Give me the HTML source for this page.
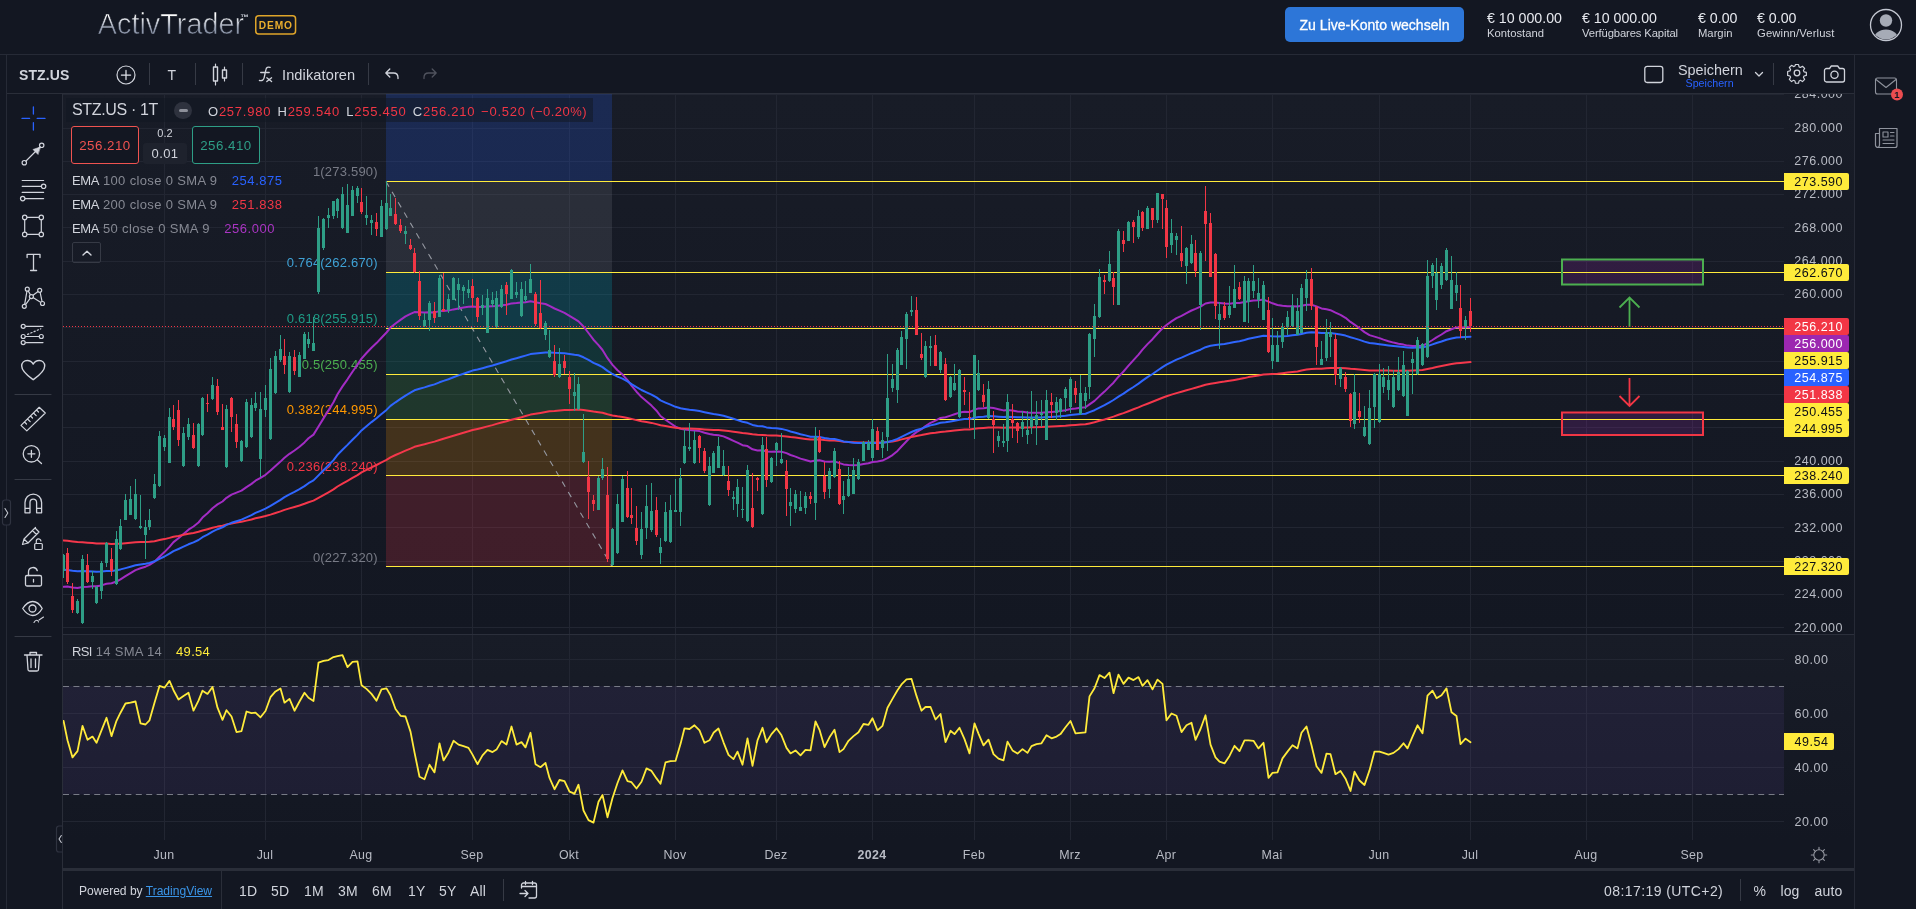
<!DOCTYPE html>
<html lang="de"><head><meta charset="utf-8"><title>ActivTrader</title>
<style>
html,body{margin:0;padding:0;background:#131722;}
body{width:1916px;height:909px;position:relative;overflow:hidden;font-family:"Liberation Sans",Arial,sans-serif;color:#d1d4dc;}
.abs{position:absolute;white-space:nowrap;}
.pane{position:absolute;background:#131722;}
.ln{position:absolute;background:#2a2e39;}
.t{position:absolute;white-space:nowrap;line-height:1;}
.sep{position:absolute;width:1px;background:#363a45;}
svg.ic{position:absolute;overflow:visible;fill:none;stroke:#d1d4dc;stroke-width:1.2;stroke-linecap:round;stroke-linejoin:round;}
</style></head><body>
<div id="wrap" style="position:absolute;left:0;top:0;width:1916px;height:909px;will-change:transform">
<!-- panes -->
<div class="pane" style="left:63px;top:94px;width:1791px;height:540px;background:linear-gradient(#181c27,#131722)"></div>
<div class="pane" style="left:63px;top:635px;width:1791px;height:205px;background:linear-gradient(#181c27,#131722)"></div>
<!-- borders -->
<div class="ln" style="left:0;top:54px;width:1916px;height:1px;background:#262a36"></div>
<div class="ln" style="left:6px;top:55px;width:1px;height:854px;background:#262a36"></div>
<div class="ln" style="left:7px;top:93px;width:1847px;height:1px"></div>
<div class="ln" style="left:62px;top:94px;width:1px;height:815px"></div>
<div class="ln" style="left:63px;top:634px;width:1791px;height:1px;background:#2b2f3b"></div>
<div class="ln" style="left:63px;top:868px;width:1791px;height:3px"></div>
<div class="ln" style="left:1854px;top:55px;width:1px;height:854px;background:#262a36"></div>
<div class="ln" style="left:221px;top:871px;width:1px;height:38px"></div>
<svg width="1916" height="909" viewBox="0 0 1916 909" style="position:absolute;left:0;top:0" font-family="Liberation Sans, Arial, sans-serif">
<defs><clipPath id="cm"><rect x="63" y="94" width="1721" height="540"/></clipPath><clipPath id="cr"><rect x="63" y="635" width="1721" height="205"/></clipPath><clipPath id="cax"><rect x="1784" y="94" width="70" height="540"/></clipPath></defs>
<path d="M164.5 94V634M164.5 635V840M265.5 94V634M265.5 635V840M361.5 94V634M361.5 635V840M472.5 94V634M472.5 635V840M569.5 94V634M569.5 635V840M675.5 94V634M675.5 635V840M776.5 94V634M776.5 635V840M872.5 94V634M872.5 635V840M974.5 94V634M974.5 635V840M1070.5 94V634M1070.5 635V840M1166.5 94V634M1166.5 635V840M1272.5 94V634M1272.5 635V840M1379.5 94V634M1379.5 635V840M1470.5 94V634M1470.5 635V840M1586.5 94V634M1586.5 635V840M1692.5 94V634M1692.5 635V840M63 627.5H1784M63 594.5H1784M63 561.5H1784M63 527.5H1784M63 494.5H1784M63 461.5H1784M63 427.5H1784M63 394.5H1784M63 361.5H1784M63 327.5H1784M63 294.5H1784M63 261.5H1784M63 227.5H1784M63 194.5H1784M63 161.5H1784M63 128.5H1784M63 94.5H1784M63 659.5H1784M63 713.5H1784M63 767.5H1784M63 821.5H1784" stroke="#222632" stroke-width="1" fill="none"/>
<g clip-path="url(#cm)">
<rect x="386" y="94" width="226" height="87" fill="#2962ff" fill-opacity="0.2"/>
<rect x="386" y="181" width="226" height="91" fill="#787b86" fill-opacity="0.2"/>
<rect x="386" y="272" width="226" height="56" fill="#00bcd4" fill-opacity="0.2"/>
<rect x="386" y="328" width="226" height="46" fill="#089981" fill-opacity="0.2"/>
<rect x="386" y="374" width="226" height="45" fill="#4caf50" fill-opacity="0.2"/>
<rect x="386" y="419" width="226" height="56" fill="#ff9800" fill-opacity="0.2"/>
<rect x="386" y="475" width="226" height="91" fill="#f23645" fill-opacity="0.2"/>
<path d="M386 181.5L612 566.5" stroke="#9598a1" stroke-width="1.1" stroke-dasharray="6 6" fill="none"/>
<rect x="1562" y="259.5" width="141" height="25" fill="#9c27b0" fill-opacity="0.2"/>
<rect x="1562" y="412.5" width="141" height="22.5" fill="#9c27b0" fill-opacity="0.2"/>
<rect x="386" y="181" width="1398" height="1" fill="#ffeb3b"/>
<rect x="386" y="272" width="1398" height="1" fill="#ffeb3b"/>
<rect x="386" y="328" width="1398" height="1" fill="#ffeb3b"/>
<rect x="386" y="374" width="1398" height="1" fill="#ffeb3b"/>
<rect x="386" y="419" width="1398" height="1" fill="#ffeb3b"/>
<rect x="386" y="475" width="1398" height="1" fill="#ffeb3b"/>
<rect x="386" y="566" width="1398" height="1" fill="#ffeb3b"/>
<rect x="1562" y="259.5" width="141" height="25" fill="none" stroke="#4caf50" stroke-width="2"/>
<rect x="1562" y="412.5" width="141" height="22.5" fill="none" stroke="#f23645" stroke-width="2"/>
<path d="M1629.5 327V298M1619.5 307.5L1629.5 297.5L1639.5 307.5" stroke="#4caf50" stroke-width="1.8" fill="none"/>
<path d="M1629.5 378V405.500M1619.5 396L1629.5 406L1639.5 396" stroke="#f23645" stroke-width="1.8" fill="none"/>
<text x="377.8" y="176.0" text-anchor="end" font-size="13" letter-spacing="0.2" fill="#787b86">1(273.590)</text>
<text x="377.8" y="267.0" text-anchor="end" font-size="13" letter-spacing="0.2" fill="#3fa2d6">0.764(262.670)</text>
<text x="377.8" y="323.3" text-anchor="end" font-size="13" letter-spacing="0.2" fill="#1f9b86">0.618(255.915)</text>
<text x="377.8" y="368.8" text-anchor="end" font-size="13" letter-spacing="0.2" fill="#4caf50">0.5(250.455)</text>
<text x="377.8" y="414.3" text-anchor="end" font-size="13" letter-spacing="0.2" fill="#ff9800">0.382(244.995)</text>
<text x="377.8" y="470.6" text-anchor="end" font-size="13" letter-spacing="0.2" fill="#f23645">0.236(238.240)</text>
<text x="377.8" y="561.6" text-anchor="end" font-size="13" letter-spacing="0.2" fill="#787b86">0(227.320)</text>
<polyline points="63.5,586.8 67.5,586.6 72.5,587.5 77.5,588.0 82.5,586.9 87.5,586.7 92.5,586.3 96.5,586.3 101.5,585.4 106.5,583.7 111.5,583.2 116.5,581.5 120.5,579.3 125.5,576.2 130.5,573.2 135.5,570.1 140.5,568.3 145.5,566.7 149.5,564.9 154.5,561.7 159.5,556.8 164.5,552.1 169.5,546.9 173.5,542.1 178.5,538.2 183.5,534.0 188.5,529.7 193.5,526.5 198.5,522.5 202.5,517.6 207.5,513.2 212.5,508.2 217.5,504.4 222.5,501.5 226.5,497.8 231.5,494.7 236.5,492.6 241.5,490.6 246.5,487.1 251.5,483.9 255.5,480.7 260.5,477.9 265.5,474.8 270.5,470.6 275.5,466.1 280.5,461.6 284.5,457.8 289.5,453.8 294.5,450.5 299.5,446.8 304.5,442.4 308.5,438.3 313.5,434.6 318.5,426.5 323.5,418.4 328.5,410.4 333.5,402.2 337.5,394.2 342.5,386.4 347.5,379.3 352.5,371.8 357.5,364.6 361.5,358.6 366.5,353.0 371.5,347.8 376.5,343.1 381.5,337.8 386.5,332.5 390.5,327.6 395.5,323.5 400.5,319.9 405.5,316.4 410.5,313.8 414.5,312.1 419.5,312.3 424.5,312.6 429.5,312.2 434.5,312.4 439.5,311.1 443.5,311.1 448.5,310.6 453.5,309.4 458.5,308.4 463.5,307.5 468.5,306.8 472.5,306.5 477.5,306.9 482.5,306.8 487.5,306.5 492.5,306.2 496.5,305.9 501.5,305.2 506.5,304.8 511.5,303.4 516.5,303.0 521.5,302.4 525.5,302.2 530.5,301.3 535.5,302.2 540.5,303.2 545.5,304.0 549.5,305.8 554.5,308.5 559.5,310.6 564.5,312.9 569.5,315.9 574.5,318.9 578.5,321.4 583.5,326.5 588.5,333.0 593.5,339.7 598.5,345.1 602.5,350.0 607.5,358.2 612.5,364.9 617.5,370.3 622.5,374.6 627.5,380.2 631.5,385.6 636.5,391.7 641.5,397.1 646.5,401.3 651.5,405.6 656.5,410.7 660.5,416.0 665.5,419.8 670.5,423.3 675.5,426.7 680.5,428.7 684.5,429.4 689.5,430.1 694.5,430.4 699.5,431.1 704.5,432.7 709.5,434.0 713.5,434.7 718.5,435.2 723.5,436.4 728.5,438.5 733.5,440.8 737.5,442.6 742.5,445.2 747.5,446.1 752.5,449.3 757.5,450.5 762.5,450.3 766.5,451.5 771.5,451.7 776.5,451.4 781.5,451.7 786.5,453.1 790.5,455.0 795.5,456.6 800.5,458.6 805.5,460.0 810.5,461.5 815.5,460.6 819.5,460.3 824.5,461.5 829.5,461.8 834.5,461.4 839.5,463.1 843.5,464.4 848.5,465.0 853.5,465.2 858.5,465.1 863.5,464.1 868.5,463.3 872.5,462.0 877.5,461.5 882.5,460.6 887.5,458.2 892.5,455.1 897.5,450.9 901.5,446.5 906.5,441.3 911.5,436.1 916.5,432.1 921.5,429.2 925.5,426.0 930.5,422.8 935.5,420.6 940.5,417.9 945.5,417.2 950.5,415.6 954.5,414.3 959.5,412.6 964.5,411.8 969.5,412.0 974.5,409.8 978.5,408.4 983.5,408.2 988.5,407.4 993.5,408.1 998.5,409.2 1003.5,410.4 1007.5,410.0 1012.5,410.6 1017.5,411.4 1022.5,411.8 1027.5,412.5 1031.5,412.7 1036.5,412.8 1041.5,412.8 1046.5,412.3 1051.5,412.0 1056.5,411.6 1060.5,411.1 1065.5,410.2 1070.5,409.0 1075.5,408.5 1080.5,407.8 1085.5,407.3 1089.5,404.4 1094.5,400.9 1099.5,396.1 1104.5,391.6 1109.5,386.6 1113.5,382.7 1118.5,376.7 1123.5,371.5 1128.5,365.7 1133.5,360.2 1138.5,354.6 1142.5,349.6 1147.5,344.1 1152.5,339.2 1157.5,333.5 1162.5,328.2 1166.5,325.0 1171.5,321.4 1176.5,318.1 1181.5,315.8 1186.5,313.2 1191.5,310.5 1195.5,308.9 1200.5,306.7 1205.5,303.5 1210.5,302.4 1215.5,302.6 1219.5,303.0 1224.5,303.6 1229.5,303.7 1234.5,303.1 1239.5,302.9 1244.5,302.1 1248.5,301.3 1253.5,300.5 1258.5,300.2 1263.5,299.6 1268.5,301.6 1272.5,303.3 1277.5,305.0 1282.5,305.8 1287.5,306.3 1292.5,306.3 1297.5,306.5 1301.5,305.7 1306.5,304.7 1311.5,304.7 1316.5,306.4 1321.5,308.4 1326.5,309.3 1330.5,310.2 1335.5,312.7 1340.5,314.9 1345.5,317.8 1350.5,321.9 1354.5,324.6 1359.5,328.3 1364.5,332.1 1369.5,335.1 1374.5,336.6 1379.5,338.1 1383.5,339.6 1388.5,341.2 1393.5,342.6 1398.5,343.7 1403.5,344.6 1407.5,345.6 1412.5,346.1 1417.5,345.9 1422.5,345.8 1427.5,343.0 1432.5,340.0 1436.5,337.3 1441.5,334.5 1446.5,331.2 1451.5,329.2 1456.5,327.4 1460.5,327.6 1465.5,327.3 1470.5,327.3" stroke="#a32cc4" stroke-width="2" fill="none" stroke-linejoin="round" stroke-linecap="round"/>
<polyline points="63.5,540.4 67.5,540.8 72.5,541.5 77.5,542.1 82.5,542.3 87.5,542.7 92.5,543.0 96.5,543.4 101.5,543.6 106.5,543.6 111.5,543.9 116.5,543.8 120.5,543.7 125.5,543.2 130.5,542.8 135.5,542.3 140.5,542.1 145.5,542.0 149.5,541.8 154.5,541.2 159.5,540.1 164.5,539.1 169.5,537.9 173.5,536.8 178.5,535.9 183.5,534.8 188.5,533.7 193.5,532.9 198.5,531.8 202.5,530.5 207.5,529.2 212.5,527.8 217.5,526.6 222.5,525.7 226.5,524.5 231.5,523.4 236.5,522.6 241.5,521.8 246.5,520.6 251.5,519.5 255.5,518.3 260.5,517.2 265.5,516.0 270.5,514.6 275.5,513.0 280.5,511.4 284.5,509.9 289.5,508.4 294.5,507.0 299.5,505.5 304.5,503.8 308.5,502.2 313.5,500.6 318.5,497.9 323.5,495.1 328.5,492.3 333.5,489.4 337.5,486.5 342.5,483.6 347.5,480.8 352.5,477.9 357.5,475.1 361.5,472.4 366.5,469.9 371.5,467.4 376.5,465.0 381.5,462.4 386.5,459.9 390.5,457.4 395.5,455.0 400.5,452.8 405.5,450.6 410.5,448.6 414.5,446.8 419.5,445.5 424.5,444.3 429.5,442.9 434.5,441.6 439.5,440.0 443.5,438.7 448.5,437.3 453.5,435.8 458.5,434.2 463.5,432.8 468.5,431.3 472.5,430.0 477.5,428.9 482.5,427.7 487.5,426.4 492.5,425.1 496.5,423.9 501.5,422.5 506.5,421.2 511.5,419.7 516.5,418.5 521.5,417.2 525.5,416.0 530.5,414.6 535.5,413.7 540.5,412.9 545.5,412.0 549.5,411.3 554.5,411.0 559.5,410.5 564.5,410.1 569.5,409.9 574.5,409.7 578.5,409.4 583.5,409.9 588.5,410.7 593.5,411.6 598.5,412.3 602.5,412.8 607.5,414.3 612.5,415.4 617.5,416.3 622.5,416.9 627.5,417.9 631.5,418.9 636.5,420.1 641.5,421.2 646.5,422.1 651.5,422.9 656.5,424.1 660.5,425.3 665.5,426.1 670.5,427.0 675.5,427.8 680.5,428.3 684.5,428.5 689.5,428.6 694.5,428.8 699.5,429.0 704.5,429.4 709.5,429.7 713.5,430.0 718.5,430.1 723.5,430.5 728.5,431.1 733.5,431.7 737.5,432.3 742.5,433.0 747.5,433.4 752.5,434.3 757.5,434.8 762.5,434.9 766.5,435.3 771.5,435.6 776.5,435.6 781.5,435.9 786.5,436.4 790.5,437.0 795.5,437.6 800.5,438.3 805.5,438.9 810.5,439.5 815.5,439.4 819.5,439.6 824.5,440.1 829.5,440.4 834.5,440.5 839.5,441.1 843.5,441.7 848.5,442.1 853.5,442.3 858.5,442.5 863.5,442.5 868.5,442.5 872.5,442.4 877.5,442.5 882.5,442.4 887.5,442.0 892.5,441.4 897.5,440.5 901.5,439.4 906.5,438.2 911.5,436.9 916.5,435.9 921.5,435.1 925.5,434.2 930.5,433.3 935.5,432.7 940.5,431.9 945.5,431.6 950.5,431.0 954.5,430.5 959.5,429.9 964.5,429.6 969.5,429.4 974.5,428.7 978.5,428.2 983.5,427.9 988.5,427.5 993.5,427.5 998.5,427.6 1003.5,427.7 1007.5,427.4 1012.5,427.4 1017.5,427.4 1022.5,427.4 1027.5,427.4 1031.5,427.3 1036.5,427.2 1041.5,427.0 1046.5,426.8 1051.5,426.6 1056.5,426.3 1060.5,426.0 1065.5,425.7 1070.5,425.2 1075.5,424.9 1080.5,424.6 1085.5,424.3 1089.5,423.4 1094.5,422.3 1099.5,420.8 1104.5,419.5 1109.5,417.9 1113.5,416.6 1118.5,414.8 1123.5,413.1 1128.5,411.2 1133.5,409.3 1138.5,407.4 1142.5,405.6 1147.5,403.7 1152.5,401.8 1157.5,399.8 1162.5,397.8 1166.5,396.3 1171.5,394.6 1176.5,393.1 1181.5,391.7 1186.5,390.3 1191.5,388.9 1195.5,387.7 1200.5,386.3 1205.5,384.7 1210.5,383.7 1215.5,382.9 1219.5,382.2 1224.5,381.6 1229.5,380.8 1234.5,379.9 1239.5,379.1 1244.5,378.1 1248.5,377.1 1253.5,376.2 1258.5,375.4 1263.5,374.5 1268.5,374.2 1272.5,374.0 1277.5,373.7 1282.5,373.2 1287.5,372.6 1292.5,372.0 1297.5,371.4 1301.5,370.5 1306.5,369.6 1311.5,369.0 1316.5,368.8 1321.5,368.7 1326.5,368.3 1330.5,367.9 1335.5,368.0 1340.5,368.0 1345.5,368.2 1350.5,368.7 1354.5,369.0 1359.5,369.5 1364.5,370.0 1369.5,370.4 1374.5,370.4 1379.5,370.5 1383.5,370.5 1388.5,370.6 1393.5,370.7 1398.5,370.7 1403.5,370.6 1407.5,370.7 1412.5,370.5 1417.5,370.2 1422.5,370.0 1427.5,369.0 1432.5,368.0 1436.5,367.0 1441.5,366.0 1446.5,364.9 1451.5,364.0 1456.5,363.2 1460.5,362.9 1465.5,362.5 1470.5,362.1" stroke="#f5374b" stroke-width="2" fill="none" stroke-linejoin="round" stroke-linecap="round"/>
<polyline points="63.5,569.7 67.5,569.9 72.5,570.7 77.5,571.3 82.5,571.1 87.5,571.3 92.5,571.4 96.5,571.7 101.5,571.5 106.5,571.0 111.5,571.0 116.5,570.3 120.5,569.4 125.5,568.1 130.5,566.7 135.5,565.3 140.5,564.5 145.5,563.7 149.5,562.9 154.5,561.3 159.5,558.8 164.5,556.5 169.5,553.7 173.5,551.2 178.5,549.0 183.5,546.7 188.5,544.3 193.5,542.4 198.5,540.0 202.5,537.2 207.5,534.6 212.5,531.6 217.5,529.2 222.5,527.3 226.5,524.9 231.5,522.8 236.5,521.2 241.5,519.6 246.5,517.3 251.5,515.1 255.5,512.9 260.5,510.8 265.5,508.6 270.5,505.8 275.5,502.8 280.5,499.8 284.5,497.1 289.5,494.3 294.5,491.9 299.5,489.2 304.5,486.1 308.5,483.2 313.5,480.4 318.5,475.4 323.5,470.3 328.5,465.3 333.5,460.1 337.5,454.9 342.5,449.7 347.5,444.9 352.5,439.8 357.5,434.9 361.5,430.4 366.5,426.2 371.5,422.1 376.5,418.3 381.5,414.1 386.5,409.9 390.5,405.9 395.5,402.3 400.5,398.9 405.5,395.6 410.5,392.7 414.5,390.3 419.5,388.8 424.5,387.4 429.5,385.8 434.5,384.4 439.5,382.3 443.5,380.9 448.5,379.3 453.5,377.3 458.5,375.4 463.5,373.7 468.5,372.0 472.5,370.6 477.5,369.5 482.5,368.2 487.5,366.8 492.5,365.5 496.5,364.2 501.5,362.7 506.5,361.3 511.5,359.5 516.5,358.2 521.5,356.8 525.5,355.6 530.5,354.1 535.5,353.5 540.5,353.0 545.5,352.4 549.5,352.4 554.5,352.8 559.5,353.0 564.5,353.3 569.5,354.0 574.5,354.8 578.5,355.3 583.5,357.3 588.5,359.9 593.5,362.8 598.5,365.0 602.5,367.1 607.5,370.9 612.5,374.0 617.5,376.6 622.5,378.6 627.5,381.4 631.5,384.1 636.5,387.2 641.5,390.0 646.5,392.3 651.5,394.6 656.5,397.4 660.5,400.4 665.5,402.6 670.5,404.7 675.5,406.8 680.5,408.2 684.5,408.9 689.5,409.7 694.5,410.3 699.5,411.0 704.5,412.2 709.5,413.3 713.5,414.1 718.5,414.7 723.5,415.7 728.5,417.2 733.5,418.8 737.5,420.1 742.5,421.8 747.5,422.8 752.5,424.9 757.5,426.0 762.5,426.3 766.5,427.4 771.5,428.0 776.5,428.3 781.5,428.9 786.5,430.1 790.5,431.5 795.5,432.8 800.5,434.2 805.5,435.4 810.5,436.7 815.5,436.7 819.5,437.0 824.5,438.1 829.5,438.7 834.5,439.0 839.5,440.3 843.5,441.4 848.5,442.1 853.5,442.7 858.5,443.1 863.5,443.0 868.5,443.1 872.5,442.8 877.5,442.9 882.5,442.8 887.5,442.0 892.5,440.7 897.5,438.9 901.5,436.9 906.5,434.4 911.5,432.0 916.5,430.0 921.5,428.6 925.5,427.0 930.5,425.4 935.5,424.2 940.5,422.8 945.5,422.3 950.5,421.4 954.5,420.7 959.5,419.7 964.5,419.1 969.5,419.1 974.5,417.8 978.5,417.0 983.5,416.7 988.5,416.1 993.5,416.3 998.5,416.7 1003.5,417.1 1007.5,416.8 1012.5,417.0 1017.5,417.2 1022.5,417.3 1027.5,417.6 1031.5,417.6 1036.5,417.5 1041.5,417.4 1046.5,417.1 1051.5,416.9 1056.5,416.6 1060.5,416.2 1065.5,415.7 1070.5,414.9 1075.5,414.5 1080.5,414.1 1085.5,413.7 1089.5,412.1 1094.5,410.2 1099.5,407.6 1104.5,405.1 1109.5,402.3 1113.5,400.0 1118.5,396.7 1123.5,393.6 1128.5,390.2 1133.5,387.0 1138.5,383.6 1142.5,380.6 1147.5,377.1 1152.5,374.0 1157.5,370.5 1162.5,367.1 1166.5,364.7 1171.5,362.1 1176.5,359.6 1181.5,357.6 1186.5,355.4 1191.5,353.2 1195.5,351.6 1200.5,349.7 1205.5,347.2 1210.5,345.8 1215.5,345.0 1219.5,344.4 1224.5,343.9 1229.5,343.1 1234.5,342.0 1239.5,341.2 1244.5,340.0 1248.5,338.8 1253.5,337.7 1258.5,336.8 1263.5,335.8 1268.5,336.1 1272.5,336.3 1277.5,336.4 1282.5,336.2 1287.5,335.9 1292.5,335.3 1297.5,334.8 1301.5,333.9 1306.5,332.8 1311.5,332.3 1316.5,332.5 1321.5,333.1 1326.5,333.0 1330.5,333.0 1335.5,333.8 1340.5,334.5 1345.5,335.6 1350.5,337.3 1354.5,338.4 1359.5,339.9 1364.5,341.6 1369.5,343.0 1374.5,343.6 1379.5,344.2 1383.5,344.8 1388.5,345.5 1393.5,346.1 1398.5,346.6 1403.5,347.0 1407.5,347.5 1412.5,347.7 1417.5,347.5 1422.5,347.5 1427.5,346.1 1432.5,344.4 1436.5,343.0 1441.5,341.5 1446.5,339.7 1451.5,338.5 1456.5,337.4 1460.5,337.3 1465.5,337.0 1470.5,336.8" stroke="#2f66ff" stroke-width="2" fill="none" stroke-linejoin="round" stroke-linecap="round"/>
<path d="M63.0 554h1V578h-1zM62.0 555h3V571h-3zM77.0 599h1V614h-1zM76.0 601h3V613h-3zM82.0 555h1V624h-1zM81.0 559h3V623h-3zM92.0 571h1V589h-1zM91.0 576h3V582h-3zM96.0 586h1V604h-1zM95.0 587h3V603h-3zM101.0 561h1V599h-1zM100.0 563h3V591h-3zM106.0 542h1V567h-1zM105.0 543h3V563h-3zM116.0 531h1V585h-1zM115.0 539h3V584h-3zM120.0 519h1V550h-1zM119.0 526h3V549h-3zM125.0 494h1V520h-1zM124.0 500h3V520h-3zM130.0 486h1V515h-1zM129.0 499h3V515h-3zM135.0 479h1V520h-1zM134.0 494h3V519h-3zM140.0 495h1V529h-1zM139.0 526h3V528h-3zM145.0 520h1V559h-1zM144.0 527h3V535h-3zM149.0 509h1V530h-1zM148.0 520h3V527h-3zM154.0 474h1V499h-1zM153.0 484h3V498h-3zM159.0 431h1V487h-1zM158.0 436h3V486h-3zM164.0 435h1V451h-1zM163.0 438h3V447h-3zM169.0 408h1V463h-1zM168.0 417h3V463h-3zM183.0 427h1V467h-1zM182.0 433h3V466h-3zM188.0 418h1V440h-1zM187.0 424h3V437h-3zM198.0 423h1V467h-1zM197.0 424h3V466h-3zM202.0 397h1V436h-1zM201.0 398h3V435h-3zM212.0 377h1V400h-1zM211.0 385h3V399h-3zM226.0 405h1V468h-1zM225.0 409h3V467h-3zM241.0 440h1V462h-1zM240.0 441h3V461h-3zM246.0 399h1V448h-1zM245.0 402h3V447h-3zM251.0 398h1V438h-1zM250.0 405h3V437h-3zM255.0 392h1V411h-1zM254.0 403h3V408h-3zM260.0 392h1V477h-1zM259.0 409h3V459h-3zM265.0 385h1V417h-1zM264.0 398h3V410h-3zM270.0 358h1V440h-1zM269.0 369h3V439h-3zM275.0 351h1V394h-1zM274.0 356h3V393h-3zM280.0 335h1V362h-1zM279.0 349h3V360h-3zM289.0 352h1V393h-1zM288.0 356h3V392h-3zM299.0 352h1V377h-1zM298.0 355h3V377h-3zM304.0 332h1V359h-1zM303.0 334h3V359h-3zM308.0 332h1V348h-1zM307.0 339h3V344h-3zM313.0 317h1V351h-1zM312.0 343h3V351h-3zM318.0 216h1V294h-1zM317.0 228h3V292h-3zM323.0 218h1V250h-1zM322.0 219h3V248h-3zM328.0 208h1V228h-1zM327.0 215h3V218h-3zM333.0 201h1V219h-1zM332.0 201h3V216h-3zM337.0 198h1V218h-1zM336.0 199h3V211h-3zM342.0 187h1V229h-1zM341.0 194h3V228h-3zM347.0 184h1V233h-1zM346.0 205h3V233h-3zM352.0 186h1V216h-1zM351.0 190h3V216h-3zM357.0 186h1V203h-1zM356.0 188h3V196h-3zM366.0 196h1V225h-1zM365.0 215h3V218h-3zM371.0 215h1V235h-1zM370.0 220h3V223h-3zM381.0 200h1V237h-1zM380.0 206h3V237h-3zM386.0 181h1V230h-1zM385.0 203h3V229h-3zM390.0 194h1V216h-1zM389.0 208h3V216h-3zM405.0 226h1V244h-1zM404.0 231h3V234h-3zM424.0 313h1V327h-1zM423.0 320h3V326h-3zM429.0 301h1V331h-1zM428.0 303h3V320h-3zM439.0 275h1V317h-1zM438.0 278h3V317h-3zM448.0 294h1V313h-1zM447.0 299h3V310h-3zM453.0 277h1V300h-1zM452.0 278h3V300h-3zM458.0 278h1V310h-1zM457.0 284h3V290h-3zM463.0 285h1V304h-1zM462.0 287h3V291h-3zM468.0 280h1V298h-1zM467.0 289h3V293h-3zM482.0 295h1V315h-1zM481.0 305h3V308h-3zM487.0 289h1V333h-1zM486.0 298h3V333h-3zM492.0 292h1V307h-1zM491.0 300h3V304h-3zM496.0 291h1V328h-1zM495.0 298h3V327h-3zM501.0 285h1V308h-1zM500.0 289h3V307h-3zM511.0 269h1V299h-1zM510.0 270h3V299h-3zM516.0 282h1V298h-1zM515.0 292h3V295h-3zM521.0 282h1V317h-1zM520.0 289h3V316h-3zM525.0 281h1V302h-1zM524.0 296h3V300h-3zM530.0 264h1V293h-1zM529.0 279h3V293h-3zM545.0 321h1V340h-1zM544.0 323h3V335h-3zM549.0 330h1V358h-1zM548.0 350h3V357h-3zM559.0 348h1V378h-1zM558.0 364h3V377h-3zM574.0 373h1V411h-1zM573.0 392h3V396h-3zM578.0 377h1V410h-1zM577.0 384h3V409h-3zM583.0 414h1V463h-1zM582.0 452h3V462h-3zM598.0 476h1V510h-1zM597.0 478h3V510h-3zM602.0 458h1V480h-1zM601.0 469h3V478h-3zM612.0 528h1V566h-1zM611.0 529h3V565h-3zM617.0 494h1V554h-1zM616.0 504h3V553h-3zM622.0 476h1V522h-1zM621.0 479h3V522h-3zM641.0 512h1V559h-1zM640.0 529h3V555h-3zM646.0 485h1V539h-1zM645.0 506h3V528h-3zM651.0 483h1V532h-1zM650.0 511h3V530h-3zM660.0 538h1V564h-1zM659.0 547h3V553h-3zM665.0 502h1V542h-1zM664.0 512h3V541h-3zM670.0 495h1V543h-1zM669.0 510h3V542h-3zM675.0 479h1V512h-1zM674.0 510h3V512h-3zM680.0 468h1V526h-1zM679.0 478h3V512h-3zM684.0 429h1V464h-1zM683.0 446h3V463h-3zM689.0 423h1V451h-1zM688.0 447h3V449h-3zM694.0 431h1V464h-1zM693.0 440h3V463h-3zM709.0 457h1V506h-1zM708.0 466h3V505h-3zM713.0 451h1V473h-1zM712.0 453h3V473h-3zM718.0 437h1V468h-1zM717.0 446h3V468h-3zM723.0 450h1V476h-1zM722.0 466h3V475h-3zM733.0 491h1V510h-1zM732.0 497h3V499h-3zM737.0 479h1V517h-1zM736.0 487h3V504h-3zM742.0 487h1V518h-1zM741.0 509h3V510h-3zM747.0 465h1V522h-1zM746.0 470h3V521h-3zM762.0 437h1V515h-1zM761.0 445h3V514h-3zM771.0 457h1V483h-1zM770.0 458h3V482h-3zM776.0 442h1V466h-1zM775.0 443h3V450h-3zM781.0 433h1V464h-1zM780.0 459h3V463h-3zM790.0 488h1V526h-1zM789.0 502h3V506h-3zM795.0 490h1V513h-1zM794.0 494h3V509h-3zM800.0 491h1V511h-1zM799.0 507h3V511h-3zM805.0 492h1V514h-1zM804.0 496h3V508h-3zM815.0 427h1V520h-1zM814.0 437h3V503h-3zM829.0 468h1V498h-1zM828.0 471h3V489h-3zM834.0 448h1V478h-1zM833.0 451h3V477h-3zM843.0 481h1V514h-1zM842.0 496h3V500h-3zM848.0 467h1V497h-1zM847.0 479h3V496h-3zM853.0 458h1V494h-1zM852.0 470h3V494h-3zM858.0 459h1V480h-1zM857.0 462h3V479h-3zM863.0 441h1V461h-1zM862.0 442h3V461h-3zM868.0 440h1V450h-1zM867.0 443h3V450h-3zM872.0 419h1V461h-1zM871.0 429h3V458h-3zM882.0 432h1V458h-1zM881.0 440h3V448h-3zM887.0 354h1V451h-1zM886.0 398h3V437h-3zM892.0 364h1V392h-1zM891.0 379h3V388h-3zM897.0 348h1V403h-1zM896.0 350h3V390h-3zM901.0 331h1V365h-1zM900.0 337h3V365h-3zM906.0 312h1V369h-1zM905.0 314h3V339h-3zM911.0 296h1V316h-1zM910.0 310h3V312h-3zM925.0 341h1V378h-1zM924.0 346h3V377h-3zM930.0 336h1V366h-1zM929.0 346h3V348h-3zM940.0 351h1V373h-1zM939.0 352h3V370h-3zM950.0 376h1V398h-1zM949.0 377h3V397h-3zM954.0 364h1V391h-1zM953.0 383h3V390h-3zM959.0 369h1V418h-1zM958.0 370h3V417h-3zM974.0 355h1V439h-1zM973.0 355h3V417h-3zM978.0 360h1V391h-1zM977.0 373h3V390h-3zM988.0 381h1V419h-1zM987.0 389h3V418h-3zM998.0 431h1V447h-1zM997.0 436h3V441h-3zM1003.0 424h1V447h-1zM1002.0 441h3V443h-3zM1007.0 394h1V452h-1zM1006.0 402h3V441h-3zM1022.0 411h1V437h-1zM1021.0 422h3V429h-3zM1027.0 411h1V444h-1zM1026.0 430h3V435h-3zM1031.0 391h1V434h-1zM1030.0 418h3V427h-3zM1036.0 401h1V445h-1zM1035.0 415h3V425h-3zM1041.0 400h1V427h-1zM1040.0 413h3V415h-3zM1046.0 390h1V440h-1zM1045.0 400h3V440h-3zM1056.0 397h1V420h-1zM1055.0 402h3V413h-3zM1060.0 398h1V418h-1zM1059.0 399h3V412h-3zM1065.0 387h1V412h-1zM1064.0 389h3V398h-3zM1070.0 377h1V413h-1zM1069.0 379h3V407h-3zM1080.0 375h1V415h-1zM1079.0 393h3V414h-3zM1085.0 387h1V409h-1zM1084.0 393h3V401h-3zM1089.0 333h1V399h-1zM1088.0 334h3V387h-3zM1094.0 304h1V357h-1zM1093.0 316h3V339h-3zM1099.0 269h1V318h-1zM1098.0 277h3V317h-3zM1109.0 251h1V282h-1zM1108.0 264h3V281h-3zM1118.0 229h1V305h-1zM1117.0 231h3V305h-3zM1128.0 221h1V241h-1zM1127.0 222h3V241h-3zM1138.0 210h1V239h-1zM1137.0 216h3V237h-3zM1147.0 206h1V229h-1zM1146.0 208h3V229h-3zM1157.0 193h1V223h-1zM1156.0 193h3V220h-3zM1171.0 219h1V253h-1zM1170.0 233h3V245h-3zM1176.0 233h1V255h-1zM1175.0 236h3V240h-3zM1186.0 247h1V284h-1zM1185.0 248h3V266h-3zM1191.0 235h1V264h-1zM1190.0 244h3V263h-3zM1200.0 251h1V330h-1zM1199.0 253h3V305h-3zM1219.0 302h1V349h-1zM1218.0 314h3V320h-3zM1229.0 286h1V318h-1zM1228.0 306h3V315h-3zM1234.0 265h1V308h-1zM1233.0 289h3V308h-3zM1244.0 276h1V322h-1zM1243.0 281h3V322h-3zM1248.0 278h1V323h-1zM1247.0 281h3V302h-3zM1253.0 265h1V298h-1zM1252.0 281h3V291h-3zM1258.0 278h1V308h-1zM1257.0 293h3V300h-3zM1263.0 281h1V320h-1zM1262.0 285h3V320h-3zM1272.0 318h1V369h-1zM1271.0 345h3V361h-3zM1277.0 331h1V362h-1zM1276.0 345h3V362h-3zM1282.0 323h1V348h-1zM1281.0 327h3V342h-3zM1287.0 311h1V335h-1zM1286.0 317h3V327h-3zM1292.0 294h1V327h-1zM1291.0 306h3V326h-3zM1297.0 298h1V335h-1zM1296.0 311h3V335h-3zM1301.0 284h1V333h-1zM1300.0 288h3V333h-3zM1306.0 270h1V311h-1zM1305.0 279h3V298h-3zM1321.0 341h1V365h-1zM1320.0 359h3V365h-3zM1326.0 319h1V361h-1zM1325.0 332h3V358h-3zM1330.0 322h1V357h-1zM1329.0 332h3V337h-3zM1340.0 367h1V387h-1zM1339.0 368h3V379h-3zM1354.0 374h1V429h-1zM1353.0 392h3V424h-3zM1364.0 406h1V437h-1zM1363.0 427h3V436h-3zM1369.0 390h1V445h-1zM1368.0 408h3V444h-3zM1374.0 373h1V428h-1zM1373.0 374h3V407h-3zM1379.0 364h1V423h-1zM1378.0 374h3V422h-3zM1383.0 368h1V393h-1zM1382.0 377h3V387h-3zM1388.0 366h1V400h-1zM1387.0 380h3V390h-3zM1393.0 370h1V408h-1zM1392.0 377h3V407h-3zM1398.0 357h1V391h-1zM1397.0 372h3V390h-3zM1403.0 351h1V397h-1zM1402.0 365h3V396h-3zM1407.0 370h1V416h-1zM1406.0 371h3V416h-3zM1412.0 352h1V394h-1zM1411.0 359h3V363h-3zM1417.0 337h1V375h-1zM1416.0 340h3V374h-3zM1422.0 343h1V366h-1zM1421.0 344h3V365h-3zM1427.0 260h1V358h-1zM1426.0 276h3V357h-3zM1432.0 263h1V288h-1zM1431.0 265h3V276h-3zM1436.0 258h1V310h-1zM1435.0 273h3V300h-3zM1441.0 263h1V289h-1zM1440.0 266h3V285h-3zM1446.0 248h1V281h-1zM1445.0 250h3V280h-3zM1451.0 256h1V309h-1zM1450.0 280h3V309h-3zM1456.0 272h1V301h-1zM1455.0 285h3V293h-3zM1465.0 316h1V340h-1zM1464.0 320h3V327h-3z" fill="#2e9e86"/>
<path d="M67.0 548h1V584h-1zM66.0 553h3V582h-3zM72.0 583h1V613h-1zM71.0 596h3V610h-3zM87.0 554h1V583h-1zM86.0 565h3V582h-3zM111.0 548h1V576h-1zM110.0 559h3V571h-3zM173.0 405h1V430h-1zM172.0 419h3V427h-3zM178.0 400h1V446h-1zM177.0 410h3V440h-3zM193.0 423h1V449h-1zM192.0 435h3V448h-3zM207.0 394h1V412h-1zM206.0 403h3V404h-3zM217.0 379h1V415h-1zM216.0 386h3V412h-3zM222.0 404h1V430h-1zM221.0 427h3V430h-3zM231.0 397h1V432h-1zM230.0 398h3V417h-3zM236.0 414h1V448h-1zM235.0 424h3V442h-3zM284.0 339h1V374h-1zM283.0 356h3V365h-3zM294.0 350h1V375h-1zM293.0 357h3V371h-3zM361.0 188h1V214h-1zM360.0 202h3V212h-3zM376.0 213h1V236h-1zM375.0 222h3V229h-3zM395.0 198h1V225h-1zM394.0 214h3V224h-3zM400.0 219h1V233h-1zM399.0 225h3V231h-3zM410.0 239h1V250h-1zM409.0 245h3V249h-3zM414.0 248h1V273h-1zM413.0 253h3V272h-3zM419.0 271h1V320h-1zM418.0 281h3V316h-3zM434.0 302h1V323h-1zM433.0 311h3V318h-3zM443.0 273h1V312h-1zM442.0 309h3V311h-3zM472.0 279h1V307h-1zM471.0 286h3V298h-3zM477.0 297h1V322h-1zM476.0 298h3V317h-3zM506.0 282h1V315h-1zM505.0 285h3V294h-3zM535.0 292h1V326h-1zM534.0 294h3V324h-3zM540.0 280h1V329h-1zM539.0 313h3V328h-3zM554.0 345h1V377h-1zM553.0 361h3V375h-3zM564.0 355h1V374h-1zM563.0 361h3V368h-3zM569.0 371h1V404h-1zM568.0 377h3V389h-3zM588.0 461h1V519h-1zM587.0 477h3V492h-3zM593.0 495h1V511h-1zM592.0 500h3V504h-3zM607.0 467h1V562h-1zM606.0 495h3V559h-3zM627.0 471h1V518h-1zM626.0 488h3V517h-3zM631.0 488h1V524h-1zM630.0 515h3V518h-3zM636.0 506h1V545h-1zM635.0 528h3V541h-3zM656.0 497h1V537h-1zM655.0 510h3V535h-3zM699.0 435h1V463h-1zM698.0 436h3V448h-3zM704.0 448h1V473h-1zM703.0 451h3V471h-3zM728.0 466h1V496h-1zM727.0 481h3V490h-3zM752.0 473h1V528h-1zM751.0 508h3V527h-3zM757.0 477h1V491h-1zM756.0 478h3V480h-3zM766.0 437h1V487h-1zM765.0 449h3V480h-3zM786.0 460h1V516h-1zM785.0 471h3V489h-3zM810.0 492h1V504h-1zM809.0 496h3V499h-3zM819.0 430h1V453h-1zM818.0 437h3V452h-3zM824.0 462h1V499h-1zM823.0 476h3V492h-3zM839.0 461h1V505h-1zM838.0 469h3V504h-3zM877.0 427h1V450h-1zM876.0 431h3V450h-3zM916.0 297h1V335h-1zM915.0 310h3V335h-3zM921.0 333h1V360h-1zM920.0 354h3V358h-3zM935.0 335h1V366h-1zM934.0 345h3V366h-3zM945.0 358h1V401h-1zM944.0 364h3V400h-3zM964.0 377h1V405h-1zM963.0 390h3V392h-3zM969.0 392h1V428h-1zM968.0 417h3V418h-3zM983.0 384h1V407h-1zM982.0 395h3V402h-3zM993.0 411h1V453h-1zM992.0 419h3V425h-3zM1012.0 404h1V438h-1zM1011.0 419h3V423h-3zM1017.0 422h1V443h-1zM1016.0 423h3V431h-3zM1051.0 393h1V418h-1zM1050.0 402h3V405h-3zM1075.0 381h1V403h-1zM1074.0 388h3V395h-3zM1104.0 275h1V294h-1zM1103.0 280h3V282h-3zM1113.0 272h1V305h-1zM1112.0 278h3V287h-3zM1123.0 231h1V252h-1zM1122.0 240h3V244h-3zM1133.0 220h1V243h-1zM1132.0 222h3V227h-3zM1142.0 211h1V231h-1zM1141.0 212h3V228h-3zM1152.0 208h1V228h-1zM1151.0 208h3V220h-3zM1162.0 194h1V229h-1zM1161.0 194h3V199h-3zM1166.0 200h1V258h-1zM1165.0 208h3V247h-3zM1181.0 226h1V267h-1zM1180.0 253h3V261h-3zM1195.0 240h1V277h-1zM1194.0 253h3V271h-3zM1205.0 186h1V261h-1zM1204.0 211h3V224h-3zM1210.0 213h1V277h-1zM1209.0 223h3V277h-3zM1215.0 253h1V319h-1zM1214.0 254h3V306h-3zM1224.0 302h1V320h-1zM1223.0 306h3V318h-3zM1239.0 282h1V300h-1zM1238.0 287h3V299h-3zM1268.0 297h1V353h-1zM1267.0 310h3V352h-3zM1311.0 268h1V310h-1zM1310.0 279h3V306h-3zM1316.0 306h1V365h-1zM1315.0 307h3V347h-3zM1335.0 334h1V385h-1zM1334.0 339h3V375h-3zM1345.0 372h1V392h-1zM1344.0 377h3V389h-3zM1350.0 393h1V427h-1zM1349.0 394h3V421h-3zM1359.0 393h1V423h-1zM1358.0 411h3V417h-3zM1460.0 285h1V338h-1zM1459.0 308h3V331h-3zM1470.0 298h1V332h-1zM1469.0 311h3V326h-3z" fill="#f23645"/>
<path d="M63 326.5H1784" stroke="#f23645" stroke-width="1" stroke-dasharray="1 2" fill="none"/>
</g>
<g clip-path="url(#cr)">
<rect x="63" y="686.0" width="1721" height="108.5" fill="#7e57c2" fill-opacity="0.1"/>
<path d="M63 686.5H1784" stroke="#787b86" stroke-width="1" stroke-dasharray="6 4.4" fill="none"/>
<path d="M63 794.5H1784" stroke="#787b86" stroke-width="1" stroke-dasharray="6 4.4" fill="none"/>
<polyline points="63.5,720.8 67.5,740.3 72.5,757.4 77.5,751.1 82.5,725.8 87.5,739.8 92.5,736.6 96.5,742.8 101.5,730.3 106.5,717.8 111.5,736.1 116.5,720.8 120.5,712.7 125.5,703.5 130.5,702.7 135.5,701.5 140.5,723.3 145.5,724.5 149.5,720.3 154.5,702.7 159.5,685.9 164.5,687.7 169.5,680.9 173.5,690.2 178.5,699.5 183.5,695.9 188.5,692.7 193.5,710.7 198.5,700.7 202.5,690.7 207.5,693.9 212.5,686.9 217.5,707.7 222.5,719.8 226.5,710.2 231.5,716.5 236.5,732.1 241.5,731.1 246.5,711.5 251.5,713.2 255.5,712.7 260.5,717.3 265.5,711.0 270.5,697.2 275.5,691.4 280.5,688.4 284.5,702.7 289.5,698.9 294.5,710.7 299.5,701.5 304.5,692.7 308.5,697.7 313.5,701.0 318.5,662.6 323.5,660.8 328.5,660.1 333.5,657.1 337.5,656.1 342.5,655.1 347.5,667.1 352.5,661.8 357.5,661.3 361.5,685.2 366.5,688.9 371.5,693.9 376.5,700.7 381.5,689.4 386.5,688.4 390.5,695.2 395.5,709.0 400.5,715.8 405.5,716.5 410.5,731.6 414.5,752.4 419.5,776.7 424.5,779.2 429.5,764.7 434.5,772.4 439.5,743.3 443.5,760.4 448.5,752.4 453.5,740.8 458.5,744.6 463.5,746.1 468.5,747.9 472.5,754.6 477.5,764.2 482.5,755.4 487.5,749.9 492.5,752.1 496.5,749.6 501.5,741.1 506.5,744.6 511.5,726.5 516.5,744.6 521.5,742.1 525.5,747.4 530.5,732.8 535.5,764.2 540.5,767.2 545.5,762.9 549.5,777.9 554.5,789.2 559.5,780.0 564.5,781.2 569.5,791.7 574.5,793.7 578.5,784.7 583.5,810.5 588.5,820.1 593.5,822.6 598.5,801.8 602.5,795.0 607.5,817.3 612.5,798.0 617.5,783.0 622.5,770.4 627.5,781.2 631.5,782.2 636.5,788.5 641.5,781.7 646.5,768.4 651.5,770.9 656.5,778.4 660.5,783.7 665.5,762.4 670.5,761.1 675.5,760.9 680.5,744.1 684.5,728.3 689.5,729.0 694.5,725.3 699.5,730.3 704.5,742.8 709.5,740.3 713.5,732.8 718.5,728.5 723.5,742.3 728.5,754.9 733.5,759.1 737.5,751.6 742.5,764.7 747.5,738.3 752.5,765.9 757.5,740.3 762.5,727.8 766.5,742.3 771.5,734.1 776.5,728.3 781.5,735.3 786.5,747.9 790.5,753.4 795.5,750.4 800.5,755.4 805.5,749.9 810.5,750.4 815.5,721.5 819.5,729.8 824.5,747.1 829.5,737.3 834.5,729.8 839.5,752.1 843.5,749.1 848.5,740.8 853.5,736.1 858.5,732.3 863.5,724.0 868.5,724.8 872.5,718.3 877.5,730.3 882.5,725.8 887.5,707.7 892.5,698.9 897.5,690.2 901.5,684.4 906.5,679.4 911.5,678.9 916.5,695.9 921.5,710.7 925.5,707.0 930.5,707.0 935.5,719.5 940.5,714.0 945.5,742.1 950.5,730.8 954.5,734.1 959.5,727.8 964.5,739.1 969.5,753.4 974.5,723.3 978.5,733.6 983.5,745.3 988.5,739.6 993.5,754.1 998.5,758.6 1003.5,760.4 1007.5,741.6 1012.5,750.4 1017.5,753.6 1022.5,749.1 1027.5,752.9 1031.5,746.1 1036.5,744.1 1041.5,743.3 1046.5,735.3 1051.5,738.3 1056.5,736.6 1060.5,734.1 1065.5,727.3 1070.5,721.0 1075.5,733.3 1080.5,732.8 1085.5,732.3 1089.5,696.4 1094.5,688.2 1099.5,675.1 1104.5,678.1 1109.5,672.6 1113.5,693.2 1118.5,674.6 1123.5,683.9 1128.5,677.6 1133.5,680.1 1138.5,677.1 1142.5,685.9 1147.5,680.1 1152.5,689.4 1157.5,679.6 1162.5,683.9 1166.5,720.3 1171.5,713.5 1176.5,715.8 1181.5,732.1 1186.5,725.3 1191.5,722.8 1195.5,739.8 1200.5,729.0 1205.5,715.3 1210.5,744.6 1215.5,757.4 1219.5,761.6 1224.5,763.4 1229.5,755.9 1234.5,745.8 1239.5,751.1 1244.5,740.3 1248.5,740.3 1253.5,740.8 1258.5,748.4 1263.5,742.8 1268.5,777.9 1272.5,772.9 1277.5,772.4 1282.5,758.4 1287.5,751.6 1292.5,745.3 1297.5,748.4 1301.5,732.8 1306.5,726.5 1311.5,745.3 1316.5,766.2 1321.5,772.9 1326.5,753.6 1330.5,754.1 1335.5,774.2 1340.5,770.9 1345.5,778.7 1350.5,791.0 1354.5,771.7 1359.5,780.5 1364.5,785.0 1369.5,770.4 1374.5,751.6 1379.5,751.6 1383.5,752.9 1388.5,754.6 1393.5,752.9 1398.5,749.1 1403.5,743.3 1407.5,748.4 1412.5,736.6 1417.5,725.3 1422.5,733.3 1427.5,695.7 1432.5,690.7 1436.5,698.2 1441.5,695.2 1446.5,688.4 1451.5,712.2 1456.5,716.0 1460.5,744.1 1465.5,738.6 1470.5,742.3" stroke="#ffeb3b" stroke-width="1.8" fill="none" stroke-linejoin="round" stroke-linecap="round"/>
</g>
<g clip-path="url(#cax)">
<text x="1818.7" y="631.7" text-anchor="middle" font-size="12.5" letter-spacing="0.5" fill="#b8bbc4">220.000</text>
<text x="1818.7" y="598.4" text-anchor="middle" font-size="12.5" letter-spacing="0.5" fill="#b8bbc4">224.000</text>
<text x="1818.7" y="565.0" text-anchor="middle" font-size="12.5" letter-spacing="0.5" fill="#b8bbc4">228.000</text>
<text x="1818.7" y="531.7" text-anchor="middle" font-size="12.5" letter-spacing="0.5" fill="#b8bbc4">232.000</text>
<text x="1818.7" y="498.4" text-anchor="middle" font-size="12.5" letter-spacing="0.5" fill="#b8bbc4">236.000</text>
<text x="1818.7" y="465.0" text-anchor="middle" font-size="12.5" letter-spacing="0.5" fill="#b8bbc4">240.000</text>
<text x="1818.7" y="431.7" text-anchor="middle" font-size="12.5" letter-spacing="0.5" fill="#b8bbc4">244.000</text>
<text x="1818.7" y="398.4" text-anchor="middle" font-size="12.5" letter-spacing="0.5" fill="#b8bbc4">248.000</text>
<text x="1818.7" y="365.0" text-anchor="middle" font-size="12.5" letter-spacing="0.5" fill="#b8bbc4">252.000</text>
<text x="1818.7" y="331.7" text-anchor="middle" font-size="12.5" letter-spacing="0.5" fill="#b8bbc4">256.000</text>
<text x="1818.7" y="298.4" text-anchor="middle" font-size="12.5" letter-spacing="0.5" fill="#b8bbc4">260.000</text>
<text x="1818.7" y="265.0" text-anchor="middle" font-size="12.5" letter-spacing="0.5" fill="#b8bbc4">264.000</text>
<text x="1818.7" y="231.7" text-anchor="middle" font-size="12.5" letter-spacing="0.5" fill="#b8bbc4">268.000</text>
<text x="1818.7" y="198.4" text-anchor="middle" font-size="12.5" letter-spacing="0.5" fill="#b8bbc4">272.000</text>
<text x="1818.7" y="165.0" text-anchor="middle" font-size="12.5" letter-spacing="0.5" fill="#b8bbc4">276.000</text>
<text x="1818.7" y="131.7" text-anchor="middle" font-size="12.5" letter-spacing="0.5" fill="#b8bbc4">280.000</text>
<text x="1818.7" y="98.4" text-anchor="middle" font-size="12.5" letter-spacing="0.5" fill="#b8bbc4">284.000</text>
</g>
<text x="1811.5" y="663.9" text-anchor="middle" font-size="12.5" letter-spacing="0.5" fill="#b8bbc4">80.00</text>
<text x="1811.5" y="717.9" text-anchor="middle" font-size="12.5" letter-spacing="0.5" fill="#b8bbc4">60.00</text>
<text x="1811.5" y="771.9" text-anchor="middle" font-size="12.5" letter-spacing="0.5" fill="#b8bbc4">40.00</text>
<text x="1811.5" y="825.9" text-anchor="middle" font-size="12.5" letter-spacing="0.5" fill="#b8bbc4">20.00</text>
<path d="M1784 173.0h63a2 2 0 0 1 2 2v13a2 2 0 0 1 -2 2h-63z" fill="#ffeb3b"/>
<text x="1818.7" y="186.0" text-anchor="middle" font-size="12.5" letter-spacing="0.5" fill="#0c0e15">273.590</text>
<path d="M1784 264.0h63a2 2 0 0 1 2 2v13a2 2 0 0 1 -2 2h-63z" fill="#ffeb3b"/>
<text x="1818.7" y="277.0" text-anchor="middle" font-size="12.5" letter-spacing="0.5" fill="#0c0e15">262.670</text>
<path d="M1784 318.0h63a2 2 0 0 1 2 2v13a2 2 0 0 1 -2 2h-63z" fill="#f23645"/>
<text x="1818.7" y="331.0" text-anchor="middle" font-size="12.5" letter-spacing="0.5" fill="#fff">256.210</text>
<path d="M1784 335.0h63a2 2 0 0 1 2 2v13a2 2 0 0 1 -2 2h-63z" fill="#9c27b0"/>
<text x="1818.7" y="348.0" text-anchor="middle" font-size="12.5" letter-spacing="0.5" fill="#fff">256.000</text>
<path d="M1784 352.0h63a2 2 0 0 1 2 2v13a2 2 0 0 1 -2 2h-63z" fill="#ffeb3b"/>
<text x="1818.7" y="365.0" text-anchor="middle" font-size="12.5" letter-spacing="0.5" fill="#0c0e15">255.915</text>
<path d="M1784 369.0h63a2 2 0 0 1 2 2v13a2 2 0 0 1 -2 2h-63z" fill="#2962ff"/>
<text x="1818.7" y="382.0" text-anchor="middle" font-size="12.5" letter-spacing="0.5" fill="#fff">254.875</text>
<path d="M1784 386.0h63a2 2 0 0 1 2 2v13a2 2 0 0 1 -2 2h-63z" fill="#f23645"/>
<text x="1818.7" y="399.0" text-anchor="middle" font-size="12.5" letter-spacing="0.5" fill="#fff">251.838</text>
<path d="M1784 403.0h63a2 2 0 0 1 2 2v13a2 2 0 0 1 -2 2h-63z" fill="#ffeb3b"/>
<text x="1818.7" y="416.0" text-anchor="middle" font-size="12.5" letter-spacing="0.5" fill="#0c0e15">250.455</text>
<path d="M1784 420.0h63a2 2 0 0 1 2 2v13a2 2 0 0 1 -2 2h-63z" fill="#ffeb3b"/>
<text x="1818.7" y="433.0" text-anchor="middle" font-size="12.5" letter-spacing="0.5" fill="#0c0e15">244.995</text>
<path d="M1784 467.0h63a2 2 0 0 1 2 2v13a2 2 0 0 1 -2 2h-63z" fill="#ffeb3b"/>
<text x="1818.7" y="480.0" text-anchor="middle" font-size="12.5" letter-spacing="0.5" fill="#0c0e15">238.240</text>
<path d="M1784 558.0h63a2 2 0 0 1 2 2v13a2 2 0 0 1 -2 2h-63z" fill="#ffeb3b"/>
<text x="1818.7" y="571.0" text-anchor="middle" font-size="12.5" letter-spacing="0.5" fill="#0c0e15">227.320</text>
<path d="M1784 733h48a2 2 0 0 1 2 2v13a2 2 0 0 1 -2 2h-48z" fill="#ffeb3b"/>
<text x="1811.5" y="746" text-anchor="middle" font-size="12.5" letter-spacing="0.5" fill="#0c0e15">49.54</text>
<text x="164.0" y="859" text-anchor="middle" font-size="12.4" letter-spacing="0.3" fill="#b8bbc4">Jun</text>
<text x="265.0" y="859" text-anchor="middle" font-size="12.4" letter-spacing="0.3" fill="#b8bbc4">Jul</text>
<text x="361.0" y="859" text-anchor="middle" font-size="12.4" letter-spacing="0.3" fill="#b8bbc4">Aug</text>
<text x="472.0" y="859" text-anchor="middle" font-size="12.4" letter-spacing="0.3" fill="#b8bbc4">Sep</text>
<text x="569.0" y="859" text-anchor="middle" font-size="12.4" letter-spacing="0.3" fill="#b8bbc4">Okt</text>
<text x="675.0" y="859" text-anchor="middle" font-size="12.4" letter-spacing="0.3" fill="#b8bbc4">Nov</text>
<text x="776.0" y="859" text-anchor="middle" font-size="12.4" letter-spacing="0.3" fill="#b8bbc4">Dez</text>
<text x="872.0" y="859" text-anchor="middle" font-size="12.4" letter-spacing="0.3" fill="#b8bbc4" font-weight="bold">2024</text>
<text x="974.0" y="859" text-anchor="middle" font-size="12.4" letter-spacing="0.3" fill="#b8bbc4">Feb</text>
<text x="1070.0" y="859" text-anchor="middle" font-size="12.4" letter-spacing="0.3" fill="#b8bbc4">Mrz</text>
<text x="1166.0" y="859" text-anchor="middle" font-size="12.4" letter-spacing="0.3" fill="#b8bbc4">Apr</text>
<text x="1272.0" y="859" text-anchor="middle" font-size="12.4" letter-spacing="0.3" fill="#b8bbc4">Mai</text>
<text x="1379.0" y="859" text-anchor="middle" font-size="12.4" letter-spacing="0.3" fill="#b8bbc4">Jun</text>
<text x="1470.0" y="859" text-anchor="middle" font-size="12.4" letter-spacing="0.3" fill="#b8bbc4">Jul</text>
<text x="1586.0" y="859" text-anchor="middle" font-size="12.4" letter-spacing="0.3" fill="#b8bbc4">Aug</text>
<text x="1692.0" y="859" text-anchor="middle" font-size="12.4" letter-spacing="0.3" fill="#b8bbc4">Sep</text>
</svg>
<!-- header -->
<svg width="320" height="54" style="position:absolute;left:0;top:0" font-family="Liberation Sans, Arial, sans-serif">
<defs><linearGradient id="lg" x1="0" y1="0" x2="0" y2="1"><stop offset="0.25" stop-color="#ffffff"/><stop offset="0.68" stop-color="#8d96a9"/></linearGradient></defs>
<text x="97.8" y="34" font-size="29.5" textLength="146.3" lengthAdjust="spacingAndGlyphs" fill="url(#lg)" stroke="#131722" stroke-width="0.7" paint-order="fill stroke">ActivTrader</text>
<text x="240.500" y="19.500" font-size="8" font-weight="bold" fill="#d5d9e3" textLength="8.500" lengthAdjust="spacingAndGlyphs">™</text>
<rect x="255.75" y="15.75" width="39.8" height="18.3" rx="3" fill="none" stroke="#dfa52a" stroke-width="1.5"/>
<text x="275.8" y="28.7" font-size="10.2" font-weight="bold" text-anchor="middle" fill="#e9ad2d" letter-spacing="0.9">DEMO</text>
</svg>
<div class="abs" style="left:1285px;top:7px;width:179px;height:35px;border-radius:5px;background:#2d76d8;color:#fff;font-size:14.050px;line-height:36px;text-align:center;font-weight:normal;-webkit-text-stroke:0.300px #fff">Zu Live-Konto wechseln</div>
<div class="t" style="left:1487px;top:10.800px;font-size:14.200px;color:#e6e8ee">€ 10 000.00</div>
<div class="t" style="left:1487px;top:27.9px;font-size:11.25px;color:#d1d4dc">Kontostand</div>
<div class="t" style="left:1582px;top:10.800px;font-size:14.200px;color:#e6e8ee">€ 10 000.00</div>
<div class="t" style="left:1582px;top:27.9px;font-size:11.25px;color:#d1d4dc;letter-spacing:-0.12px">Verfügbares Kapital</div>
<div class="t" style="left:1698px;top:10.800px;font-size:14.200px;color:#e6e8ee">€ 0.00</div>
<div class="t" style="left:1698px;top:27.9px;font-size:11.25px;color:#d1d4dc">Margin</div>
<div class="t" style="left:1757px;top:10.800px;font-size:14.200px;color:#e6e8ee">€ 0.00</div>
<div class="t" style="left:1757px;top:27.9px;font-size:11.25px;color:#d1d4dc;letter-spacing:0.14px">Gewinn/Verlust</div>
<svg width="40" height="40" style="position:absolute;left:1866px;top:5px"><defs><clipPath id="uc"><circle cx="20" cy="20" r="14.5"/></clipPath></defs>
<circle cx="20" cy="20" r="15.5" fill="none" stroke="#c3c7d1" stroke-width="1.3"/>
<g clip-path="url(#uc)" fill="#a6abb6"><circle cx="20" cy="15.5" r="6.2"/><ellipse cx="20" cy="35" rx="12.5" ry="10.5"/></g></svg>

<!-- top toolbar -->
<div class="t" style="left:19px;top:68px;font-size:14px;font-weight:bold;color:#d1d4dc;letter-spacing:0.1px">STZ.US</div>
<svg class="ic" style="left:115.5px;top:64.5px" width="20" height="20"><circle cx="10" cy="10" r="9"/><path d="M10 5.4V14.600M5.400 10H14.600" stroke="#e0e2e9" stroke-width="1.25"/></svg>
<div class="sep" style="left:149px;top:63px;height:22px"></div>
<div class="t" style="left:167.5px;top:68px;font-size:14px;color:#d1d4dc">T</div>
<div class="sep" style="left:195px;top:63px;height:22px"></div>
<svg class="ic" style="left:210px;top:62px" width="20" height="24"><path d="M5.5 2V5M5.5 19V23M14.5 5V8M14.5 16V19"/><rect x="3.5" y="5" width="4" height="14" stroke-width="1.4"/><rect x="12.5" y="8" width="4" height="8" stroke-width="1.4"/></svg>
<div class="sep" style="left:242px;top:63px;height:22px"></div>
<svg class="ic" style="left:256px;top:63px" width="20" height="24"><path d="M14.1 4.4c-2.2-.9-3.800 0-4.200 2.300L8.200 14.500c-.4 2.500-2 3.600-4.800 3M4.700 9.500h8.500M10.800 14.800l4.800 3.800M15.600 14.800l-4.800 3.800" stroke-width="1.3"/></svg>
<div class="t" style="left:282px;top:67.5px;font-size:14.6px;color:#d1d4dc;letter-spacing:0.1px">Indikatoren</div>
<div class="sep" style="left:368px;top:63px;height:22px"></div>
<svg class="ic" style="left:383px;top:66px" width="18" height="16"><path d="M6.800 3L2.800 7L6.800 11M2.800 7h7.700c2.700 0 4.500 1.800 4.500 4.500V12.500" stroke-width="1.3"/></svg>
<svg class="ic" style="left:421px;top:66px;stroke:#50535e" width="18" height="16"><path d="M11.200 3L15.200 7L11.200 11M15.200 7H7.500c-2.700 0-4.500 1.800-4.500 4.500V12.500" stroke-width="1.3"/></svg>
<!-- toolbar right -->
<svg class="ic" style="left:1644px;top:65px" width="20" height="20"><rect x="0.8" y="1.3" width="18" height="16.2" rx="2.4" stroke-width="1.3"/></svg>
<div class="t" style="left:1678px;top:63.2px;font-size:14.4px;color:#d1d4dc">Speichern</div>
<div class="t" style="left:1685.500px;top:78px;font-size:10.700px;color:#2962ff">Speichern</div>
<svg class="ic" style="left:1753px;top:70px" width="12" height="8"><path d="M2.5 2.5L6 6L9.5 2.5" stroke-width="1.3"/></svg>
<div class="sep" style="left:1773px;top:63px;height:22px"></div>
<svg class="ic" style="left:1786px;top:62.300px" width="22" height="22"><circle cx="11" cy="11" r="2.8" stroke-width="1.3"/><path stroke-width="1.3" d="M9.3 1.6h3.4l.6 2.6 1.5.7 2.3-1.4 2.4 2.4-1.4 2.3.7 1.5 2.6.6v3.4l-2.6.6-.7 1.5 1.4 2.3-2.4 2.4-2.3-1.4-1.5.7-.6 2.6H9.3l-.6-2.6-1.5-.7-2.3 1.4-2.4-2.4 1.4-2.3-.7-1.5-2.6-.6V9.3l2.6-.6.7-1.500-1.4-2.3 2.4-2.4 2.300 1.400 1.500-.700z" transform="translate(1.1,1.1) scale(0.9)"/></svg>
<svg class="ic" style="left:1823px;top:64px" width="24" height="20"><path stroke-width="1.3" d="M1.500 6.500a2 2 0 0 1 2-2h3l1.800-2.500h6.400l1.800 2.500h3a2 2 0 0 1 2 2v9.500a2 2 0 0 1 -2 2h-16a2 2 0 0 1 -2-2z"/><circle cx="11.500" cy="10.800" r="3.600" stroke-width="1.300"/></svg>

<!-- right sidebar -->
<svg class="ic" style="left:1873px;top:76px;stroke:#8f939d" width="32" height="26"><rect x="2.500" y="2" width="21" height="16" rx="2" stroke-width="1.100"/><path d="M3 3.500l10 8 10-8" stroke-width="1.100"/><circle cx="24" cy="18.400" r="6" fill="#ec4d50" stroke="none"/></svg>
<div class="t" style="left:1894.300px;top:89.800px;font-size:9.500px;font-weight:bold;color:#131722">1</div>
<svg class="ic" style="left:1874px;top:126px;stroke:#8f939d" width="28" height="26"><path stroke-width="1.200" d="M5.500 2.500h17.500v17a2 2 0 0 1 -2 2h-17a2.500 2.500 0 0 1 -2.500-2.500v-11.500h4M5.500 2.500v16.500a2.500 2.500 0 0 1 -2 2.500"/><rect x="9" y="6" width="5" height="5" stroke-width="1.100"/><path stroke-width="1.100" d="M16.500 6.500h3.500M16.500 10h3.500M9 14h11M9 17.500h11"/></svg>

<!-- left toolbar -->
<svg class="ic" style="left:7px;top:95px" width="55" height="600">
<g stroke="#2962ff" stroke-width="1.300"><path d="M26.400 12v7M26.400 27.700v7.300M15 23.400h7.600M30.200 23.400h7.800"/></g>
<g><path d="M19 66L33 52"/><circle cx="17.300" cy="67.700" r="2.200"/><circle cx="34.700" cy="50.300" r="2.200"/><path d="M33.300 52l-7.300 2.500 4.800 4.800z" fill="#d1d4dc" stroke-width="0.600"/></g>
<g><path d="M15.200 85.500h21.400M15.200 91.300h19.200M15.200 97.400h21.400M17.900 103.600h18.700"/><circle cx="36.600" cy="91.300" r="2.200" fill="#131722"/><circle cx="15.700" cy="103.600" r="2.200" fill="#131722"/></g>
<g><rect x="17.700" y="122.400" width="16.600" height="17"/><circle cx="17.700" cy="122.400" r="2.200" fill="#131722"/><circle cx="34.300" cy="122.400" r="2.200" fill="#131722"/><circle cx="17.700" cy="139.400" r="2.200" fill="#131722"/><circle cx="34.300" cy="139.400" r="2.200" fill="#131722"/></g>
<g><path d="M20.100 162.500v-3.200h12.900v3.200M26.500 159.300v16.200M23.600 175.500h6" stroke-width="1.300"/></g>
<g><path d="M20.300 194.200L17.300 211.300M20.300 194.200L24.400 201.600M24.400 201.600L17.300 211.300M24.400 201.600L32.700 195.300M32.700 195.300L35.500 208.500M24.400 201.600L35.500 208.500"/><circle cx="20.300" cy="194.200" r="2" fill="#131722"/><circle cx="32.700" cy="195.300" r="2" fill="#131722"/><circle cx="24.400" cy="201.600" r="2" fill="#131722"/><circle cx="35.500" cy="208.500" r="2" fill="#131722"/><circle cx="17.300" cy="211.300" r="2" fill="#131722"/></g>
<g><path d="M18.300 231.300h17.700M18.300 241.500h14M18.300 247.600h17.700"/><path d="M20.600 239.400l13.200-5.600" stroke-dasharray="1.300 2.200"/><circle cx="16.200" cy="231.300" r="2" fill="#131722"/><circle cx="16.200" cy="241.500" r="2" fill="#131722"/><circle cx="34.300" cy="241.500" r="2" fill="#131722"/><circle cx="16.200" cy="247.600" r="2" fill="#131722"/></g>
<g><path d="M26.2 284.7c-4-3-11.5-8-11.5-13.7 0-3.4 2.5-5.5 5.5-5.500 2.4 0 4.700 1.300 6 3.600 1.300-2.300 3.600-3.600 6-3.600 3 0 5.500 2.100 5.500 5.500 0 5.700-7.500 10.700-11.500 13.700z" stroke-width="1.4"/></g>
<path d="M8 299.500h36" stroke="#363a45"/>
<g><path d="M14 330.400l18.200-18.100 6.100 5.700-18.500 17.900zM17.500 327l2 2M20.500 324l2.700 2.700M23.500 321l2 2M26.500 318l2.700 2.700M29.500 315l2 2" stroke-width="1.200"/></g>
<g><circle cx="24.400" cy="358.800" r="8.200" stroke-width="1.300"/><path d="M30.500 365l4 3.500M24.400 355.300v7M20.900 358.800h7" stroke-width="1.300"/></g>
<path d="M8 384.500h36" stroke="#363a45"/>
<g><path d="M18 417.800v-10.400a8.300 8.300 0 0 1 16.600 0v10.400h-5v-10.400a3.300 3.300 0 0 0 -6.600 0v10.400zM18 413.300h5M29.600 413.300h5" stroke-width="1.300"/></g>
<g><path d="M15.5 449.5l1.5-5.5 11-11 4 4-11 11zM25.5 435.5l4 4M17 444l4 4M19 442l9.5-9.5" stroke-width="1.2"/><rect x="27.7" y="448.5" width="7.6" height="6" rx="1" stroke-width="1.2" fill="#131722"/><path d="M29.3 448.5v-2a2.3 2.3 0 0 1 4.600-0.5" stroke-width="1.2"/></g>
<g><rect x="18.500" y="480.500" width="16" height="10.500" rx="1.500" stroke-width="1.300"/><path d="M21.500 480.500v-3.500a4.500 4.500 0 0 1 8.800-1.300M26.500 484.500v2.500" stroke-width="1.300"/></g>
<g><path d="M15.700 513.500c3-4.500 6-7 10-7s7 2.500 9.500 7c-2.500 4.500-5.500 7-9.500 7s-7-2.500-10-7z" stroke-width="1.300"/><circle cx="25.500" cy="513.500" r="3.500" stroke-width="1.300"/><path d="M27 527.500c1.500-3 4-3 4.500-.5M32 525l4.500-3" stroke-width="1.100"/></g>
<path d="M8 541.500h36" stroke="#363a45"/>
<g><path d="M17.500 560h17.500M20 560l1 14.500a1.500 1.500 0 0 0 1.500 1.500h7.500a1.500 1.500 0 0 0 1.500-1.500l1-14.500M23 560v-2.500h6.500v2.500M24 564v8.500M28.500 564v8.500" stroke-width="1.300"/></g>
</svg>
<!-- collapse handles -->
<svg class="ic" style="left:0;top:498px;stroke:#2f3340" width="12" height="30"><rect x="2.500" y="2" width="8" height="25" rx="2.500" fill="#131722"/><path d="M5 10.500l2.800 4.500-2.800 4.500" stroke="#c5c8d0" stroke-width="1.100"/></svg>
<svg class="ic" style="left:55px;top:825px;stroke:#2f3340" width="8" height="30"><path d="M7 1h-3a2.500 2.500 0 0 0 -2.500 2.500v21a2.500 2.500 0 0 0 2.500 2.500h3"/><path d="M6.300 10.500l-2.300 3.500 2.300 3.500" stroke="#c5c8d0" stroke-width="1.100"/></svg>

<!-- chart legend -->
<div class="abs" style="left:66px;top:98px;width:527px;height:23.500px;background:rgba(19,23,34,0.550)"></div>
<div class="t" style="left:72px;top:102px;font-size:16px;color:#d1d4dc;letter-spacing:-0.350px">STZ.US · 1T</div>
<div class="abs" style="left:174px;top:102px;width:18px;height:17px;border-radius:8.500px;background:#2e323e"></div>
<div class="abs" style="left:178.500px;top:109px;width:9px;height:3px;border-radius:1.500px;background:#8d909a"></div>
<div class="t" style="left:208px;top:104.500px;font-size:13px;letter-spacing:0.750px;word-spacing:1.500px;color:#f23645"><span style="color:#d1d4dc">O</span>257.980 <span style="color:#d1d4dc;margin-left:0.500px">H</span>259.540 <span style="color:#d1d4dc;margin-left:0.500px">L</span>255.450 <span style="color:#d1d4dc;margin-left:0.500px">C</span>256.210 −0.520<span style="letter-spacing:0.45px;margin-left:-1px"> (−0.20%)</span></div>
<div class="abs" style="left:71px;top:126px;width:66px;height:36px;border:1px solid #ef5350;border-radius:3px;background:#131722"></div>
<div class="t" style="left:71px;top:139px;width:68px;text-align:center;font-size:13.300px;letter-spacing:0.500px;color:#ef5350">256.210</div>
<div class="t" style="left:143px;top:128px;width:44px;text-align:center;font-size:11px;color:#d1d4dc">0.2</div>
<div class="abs" style="left:143px;top:142.500px;width:44px;height:21px;border-radius:3px;background:#1e222d"></div>
<div class="t" style="left:143px;top:146.500px;width:44px;text-align:center;font-size:13px;letter-spacing:0.400px;color:#d1d4dc">0.01</div>
<div class="abs" style="left:192px;top:126px;width:66px;height:36px;border:1px solid #2e9e86;border-radius:3px;background:#131722"></div>
<div class="t" style="left:192px;top:139px;width:68px;text-align:center;font-size:13.300px;letter-spacing:0.500px;color:#2e9e86">256.410</div>
<div class="t" style="left:72px;top:173.500px;font-size:13px;letter-spacing:0.350px;color:#868993"><span style="color:#d1d4dc;letter-spacing:-0.4px">EMA</span>&nbsp;100 close 0 SMA 9<span style="color:#2962ff;margin-left:14.500px;letter-spacing:0.550px">254.875</span></div>
<div class="t" style="left:72px;top:197.500px;font-size:13px;letter-spacing:0.350px;color:#868993"><span style="color:#d1d4dc;letter-spacing:-0.4px">EMA</span>&nbsp;200 close 0 SMA 9<span style="color:#f23645;margin-left:14.500px;letter-spacing:0.550px">251.838</span></div>
<div class="t" style="left:72px;top:221.500px;font-size:13px;letter-spacing:0.350px;color:#868993"><span style="color:#d1d4dc;letter-spacing:-0.4px">EMA</span>&nbsp;50 close 0 SMA 9<span style="color:#ab35c4;margin-left:14.500px;letter-spacing:0.550px">256.000</span></div>
<div class="abs" style="left:72px;top:242px;width:29px;height:20.500px;border:1px solid #363a45;border-radius:2px;box-sizing:border-box"></div>
<svg class="ic" style="left:80.500px;top:248.500px" width="12" height="8"><path d="M2 6l4-3.800 4 3.800" stroke-width="1.400"/></svg>
<div class="t" style="left:72px;top:644.500px;font-size:13px;letter-spacing:0.300px;color:#868993"><span style="color:#d1d4dc;letter-spacing:-0.6px">RSI</span>&nbsp;14 SMA 14<span style="color:#ffeb3b;margin-left:14px">49.54</span></div>

<!-- time axis gear -->
<svg class="ic" style="left:1809.4px;top:844.8px;stroke:#9598a1" width="20" height="20"><circle cx="10" cy="10" r="5.2" stroke-width="1.1"/><path stroke-width="1.1" d="M10 2.300v2.200M10 15.500v2.200M2.300 10h2.200M15.500 10h2.200M4.600 4.600l1.500 1.500M13.900 13.900l1.500 1.500M15.400 4.600l-1.500 1.500M6.100 13.900l-1.500 1.500"/></svg>

<!-- bottom bar -->
<div class="t" style="left:79px;top:885px;font-size:12.050px;color:#d1d4dc">Powered by <span style="color:#3a95e8;text-decoration:underline">TradingView</span></div>
<div class="t" style="left:239px;top:883.500px;font-size:14px;color:#d1d4dc;letter-spacing:0.100px"><span class="abs" style="left:0">1D</span><span class="abs" style="left:32px">5D</span><span class="abs" style="left:65px">1M</span><span class="abs" style="left:99px">3M</span><span class="abs" style="left:133px">6M</span><span class="abs" style="left:169px">1Y</span><span class="abs" style="left:200px">5Y</span><span class="abs" style="left:231px">All</span></div>
<div class="sep" style="left:503px;top:879px;height:22px"></div>
<svg class="ic" style="left:518px;top:880px" width="22" height="20"><path stroke-width="1.300" d="M3.500 8v-3a2 2 0 0 1 2-2h11a2 2 0 0 1 2 2v11a2 2 0 0 1 -2 2h-5.500M3.500 6.500h15M7.500 1.500v3M14.500 1.500v3M2 13.500h8M7 10.500l3 3-3 3"/></svg>
<div class="t" style="left:1604px;top:883.5px;font-size:14px;color:#d1d4dc;letter-spacing:0.42px">08:17:19 (UTC+2)</div>
<div class="sep" style="left:1740px;top:879px;height:22px"></div>
<div class="t" style="left:1753.4px;top:883.5px;font-size:14px;color:#d1d4dc">%</div>
<div class="t" style="left:1780.4px;top:883.5px;font-size:14px;color:#d1d4dc;letter-spacing:0.15px">log</div>
<div class="t" style="left:1814.4px;top:883.5px;font-size:14px;color:#d1d4dc;letter-spacing:0.25px">auto</div>

</div>
</body></html>
